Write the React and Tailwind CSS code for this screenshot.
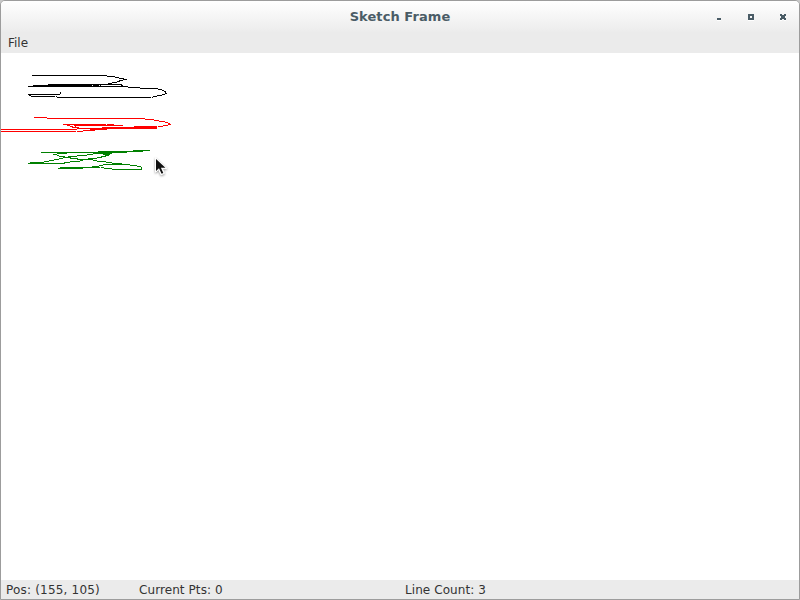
const strokes = [
  {
    color: '#000000',
    d: 'M32 75.5H107M107 76.5H115M115 77.5H119M119 78.5H124M123 79.5H127M119 80.5H123M117 81.5H120M112 82.5H117M108 83.5H112M48 84.5H122M33 85.5H92M93 85.5H99M100 85.5H101M121 85.5H123M28 86.5H128M128 87.5H140M140 88.5H158M158 89.5H162M162 90.5H164M164 91.5H166M165 92.5H166M165 93.5H167M162 94.5H165M157 95.5H162M153 96.5H157M152 97.5H153M57 97.5H151M56 96.5H57M31 96.5H55M29 95.5H31M28 94.5H60M60 92.5H61M60 93.5H61',
  },
  {
    color: '#ff0000',
    d: 'M34 117.5H47M47 118.5H145M145 119.5H154M154 120.5H159M159 121.5H165M165 122.5H168M168 123.5H170M168 124.5H171M163 125.5H168M158 126.5H163M63 124.5H106M107 124.5H114M67 125.5H70M74 125.5H123M134 126.5H157M70 126.5H73M75 126.5H76M72 127.5H79M102 127.5H157M77 128.5H157M1 129.5H77M90 129.5H107M83 130.5H95M1 131.5H76M77 131.5H83',
  },
  {
    color: '#008000',
    d: 'M133 150.5H150M98 151.5H143M41 152.5H127M57 153.5H67M93 153.5H112M53 154.5H57M87 154.5H93M103 154.5H110M57 155.5H59M77 155.5H87M105 155.5H109M59 156.5H65M68 156.5H77M101 156.5H106M63 157.5H71M97 157.5H102M59 158.5H63M70 158.5H78M88 158.5H97M54 159.5H59M77 159.5H93M49 160.5H54M80 160.5H83M93 160.5H97M44 161.5H49M70 161.5H80M97 161.5H106M30 162.5H44M64 162.5H70M106 162.5H112M28 163.5H65M112 163.5H122M103 164.5H130M99 165.5H103M130 165.5H137M92 166.5H99M137 166.5H141M141 167.5H142M141 168.5H142M60 167.5H100M101 167.5H104M58 168.5H83M104 168.5H112M112 169.5H142',
  },
];

function Sketch() {
  return (
    <svg className="block h-[527px] w-[798px]" viewBox="1 53 798 527" fill="none" shapeRendering="crispEdges">
      {strokes.map((s) => <path key={s.color} d={s.d} stroke={s.color} />)}
    </svg>
  );
}

function Cursor() {
  return (
    <svg className="absolute left-[154px] top-[157px] h-[21px] w-[16px] drop-shadow-[0px_1px_1px_rgba(0,0,0,0.4)]" viewBox="0 0 16 21">
      <path d="M1.5 .8V15.2l3.2-2.6 2.3 5.2 3.5-1.5-2.2-4.9h4.6Z" fill="#fff" stroke="#fff" strokeWidth="1" />
      <path d="M2 2V14l3-2.7 2.6 5.5 1.7-.8-2.4-5.3h4.5Z" fill="#111" />
    </svg>
  );
}

function WindowButtons() {
  return (
    <svg className="h-[10px] w-[78px]" viewBox="714 12 78 10" shapeRendering="crispEdges">
      <path d="M717 20h4v1h-4zM748 20h6v1h-6zM780 20h2v1h-2zM784 20h2v1h-2z" fill="#fff" />
      <path d="M717 18h4v2h-4z" fill="#4a5c66" />
      <path d="M748 14h6v6h-6zM750 16v2h2v-2z" fillRule="evenodd" fill="#4a5c66" />
      <path d="M780 14h2v1h2v-1h2v2h-1v2h1v2h-2v-1h-2v1h-2v-2h1v-2h-1z" fill="#4a5c66" />
    </svg>
  );
}

export default function App() {
  return (
    <div className="h-[600px] w-[800px] overflow-hidden bg-[#c8c8c8] font-['DejaVu_Sans',sans-serif] text-[12px] leading-[16px] text-[#333]">
      <div className="relative flex h-full flex-col overflow-hidden rounded-t-[5px] border border-[#9c9c9c] bg-[#ebebeb]">
        <header className="grid h-[31px] shrink-0 grid-cols-[1fr_auto_1fr] bg-linear-to-b from-white to-[#ececec]">
          <span />
          <h1 className="pt-[7px] text-[13px] font-bold leading-[17px] tracking-[0.08px] text-[#4a5c66]">Sketch Frame</h1>
          <div className="flex justify-end pr-[7px] pt-[11px]"><WindowButtons /></div>
        </header>
        <nav className="h-[21px] shrink-0 pl-[7px] pt-[3px]">File</nav>
        <main className="h-[527px] shrink-0 bg-white"><Sketch /></main>
        <footer className="flex h-[19px] pl-[5px] pt-[2px]">
          <span className="w-[133px] tracking-[0.19px]">Pos: (155, 105)</span>
          <span className="w-[266px] tracking-[0.08px]">Current Pts: 0</span>
          <span className="tracking-[0.08px]">Line Count: 3</span>
        </footer>
      </div>
      <Cursor />
    </div>
  );
}
